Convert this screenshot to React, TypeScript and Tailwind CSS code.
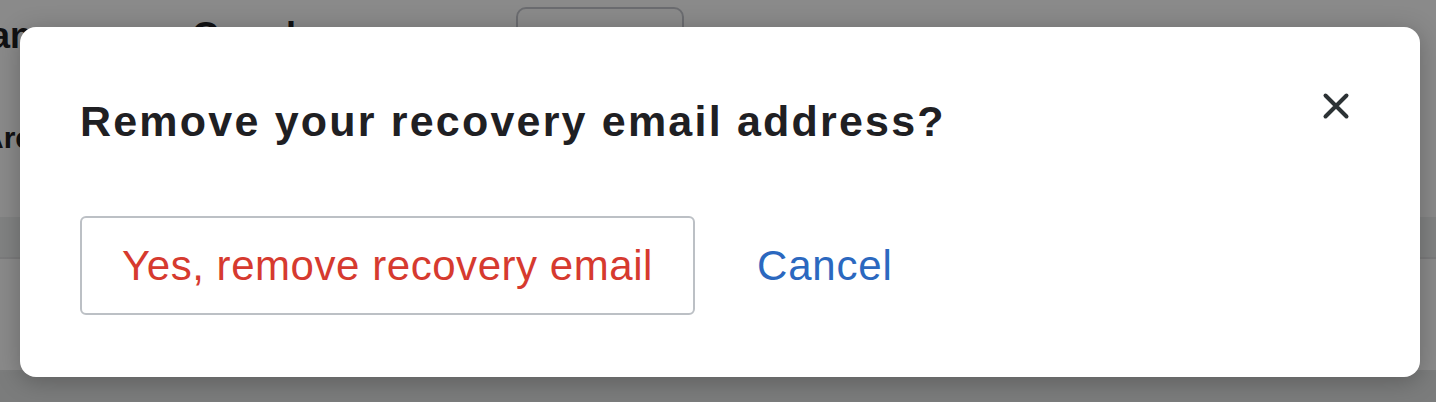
import React from "react";

function CloseIcon() {
  return (
    <svg width="28" height="28" viewBox="0 0 28 28" fill="none">
      <path
        d="M3.5 3.5L24.5 24.5M24.5 3.5L3.5 24.5"
        stroke="#2c3235"
        strokeWidth="4"
        strokeLinecap="round"
      />
    </svg>
  );
}

export default function App() {
  return (
    <div className="relative h-[402px] w-[1436px] overflow-hidden bg-white font-['Liberation_Sans',Arial,sans-serif]">
      {/* page behind the dialog */}
      <div className="flex flex-col">
        <div className="flex h-[72px] items-start">
          <div className="ml-[-40px] mt-[14px] w-[556px] shrink-0 text-[36px] font-bold leading-[44px] text-[#202124]">
            Manage your Google
          </div>
          <div className="mt-[7px] h-[48px] w-[168px] rounded-[10px] border-2 border-[#c6c8cf]" />
        </div>
        <div className="ml-[-18px] mt-[48px] h-[97px] text-[30px] font-bold leading-[36px] text-[#202124]">
          Are
        </div>
        <div className="h-[42px] border-b-2 border-[#e3e4e6] bg-[#eef0f1]" />
        <div className="h-[113px] border-b-2 border-[#e6e7e8]" />
        <div className="h-[30px] bg-[#e4e5e6]" />
      </div>

      <div className="absolute inset-0 bg-black/[0.46]" />

      {/* dialog */}
      <div className="absolute left-[20px] top-[27px] flex h-[350px] w-[1400px] flex-col rounded-2xl bg-white pl-[60px] pr-[70px] shadow-[0_4px_24px_rgba(0,0,0,0.25)]">
        <div className="mt-[70px] flex items-start justify-between">
          <h2 className="text-[43px] font-bold leading-[48px] tracking-[2.2px] text-[#1f2023]">
            Remove your recovery email address?
          </h2>
          <button type="button" className="mt-[-5px]" aria-label="Close">
            <CloseIcon />
          </button>
        </div>
        <div className="mt-[71px] flex items-center gap-[62px]">
          <button
            type="button"
            className="flex h-[99px] w-[615px] items-center justify-center rounded-md border-2 border-[#bcc0c5] text-[42px] tracking-[0.55px] text-[#d63a2f]"
          >
            Yes, remove recovery email
          </button>
          <button type="button" className="text-[42px] tracking-[0.8px] text-[#2b68bf]">
            Cancel
          </button>
        </div>
      </div>
    </div>
  );
}
